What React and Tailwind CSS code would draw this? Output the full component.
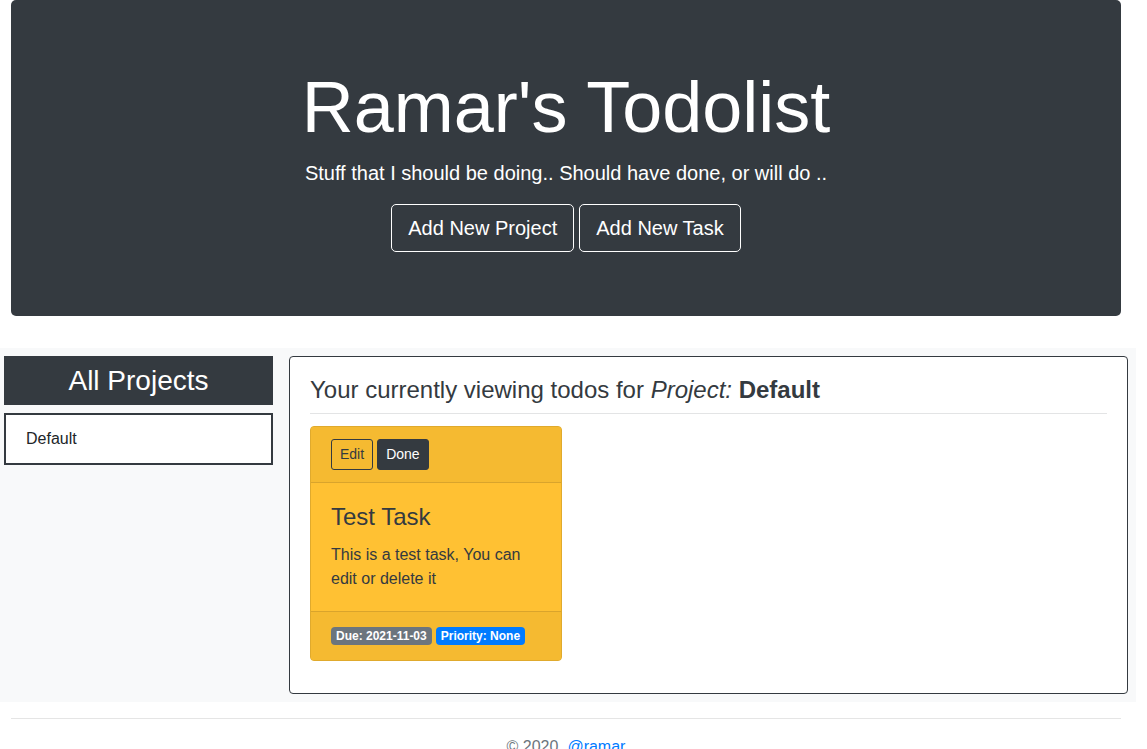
export default function App() {
  return (
    <div
      className="w-[1147px] bg-white text-[#212529] text-[16px] leading-[1.5]"
      style={{ fontFamily: '"Liberation Sans", Arial, sans-serif' }}
    >
      {/* Jumbotron */}
      <div className="ml-[11px] w-[1110px] rounded-[5px] bg-[#343a40] pt-[64px] pb-[64px] text-center text-white">
        <h1 className="text-[72px] font-light leading-[1.2] mb-[8px]">Ramar's Todolist</h1>
        <p className="text-[20px] leading-[1.5] mb-[16px]">
          Stuff that I should be doing.. Should have done, or will do ..
        </p>
        <div className="flex justify-center gap-[5px]">
          <button className="h-[48px] rounded-[5px] border border-white px-[16px] text-[20px] leading-[1.5] text-white">
            Add New Project
          </button>
          <button className="h-[48px] rounded-[5px] border border-white px-[16px] text-[20px] leading-[1.5] text-white">
            Add New Task
          </button>
        </div>
      </div>

      {/* Main section */}
      <div className="mt-[32px] w-[1136px] bg-[#f8f9fa] pl-[4px] pr-[8px] py-[8px] flex gap-[16px] items-start">
        {/* Sidebar */}
        <div className="w-[269px] shrink-0">
          <div className="h-[49px] bg-[#343a40] text-white text-[28px] leading-[49px] text-center">
            All Projects
          </div>
          <div className="mt-[8px] h-[52px] border-2 border-[#343a40] bg-white pl-[20px] flex items-center text-[16px] text-[#212529]">
            Default
          </div>
        </div>

        {/* Content card */}
        <div className="flex-1 h-[338px] rounded-[4px] border border-[#343a40] bg-white px-[20px] pt-[19px]">
          <h4 className="text-[24px] leading-[1.2] text-[#343a40] pb-[8px] border-b border-[#e3e4e5]">
            Your currently viewing todos for <em>Project:</em> <strong>Default</strong>
          </h4>
          <div className="mt-[12px] w-[252px] rounded-[4px] border border-[#e0aa2d] bg-[#ffc133] text-[#343a40] overflow-hidden">
            <div className="bg-[#f5ba31] border-b border-[#d9a42c] px-[20px] py-[12px] flex gap-[4px]">
              <button className="h-[31px] rounded-[3px] border border-[#343a40] px-[8px] text-[14px] leading-[1.5] text-[#343a40]">
                Edit
              </button>
              <button className="h-[31px] rounded-[3px] border border-[#343a40] bg-[#343a40] px-[8px] text-[14px] leading-[1.5] text-white">
                Done
              </button>
            </div>
            <div className="px-[20px] pt-[20px] pb-[20px]">
              <h4 className="text-[24px] leading-[1.2] mb-[11px]">Test Task</h4>
              <p className="text-[16px] leading-[24px]">This is a test task, You can edit or delete it</p>
            </div>
            <div className="bg-[#f5ba31] border-t border-[#d9a42c] px-[20px] py-[12px]">
              <div className="h-[24px] flex items-center gap-[4px]">
                <span className="inline-block rounded-[4px] bg-[#6c757d] px-[5px] py-[3px] text-[12px] font-bold leading-[12px] text-white">
                  Due: 2021-11-03
                </span>
                <span className="inline-block rounded-[4px] bg-[#007bff] px-[5px] py-[3px] text-[12px] font-bold leading-[12px] text-white">
                  Priority: None
                </span>
              </div>
            </div>
          </div>
        </div>
      </div>

      {/* Footer */}
      <div className="ml-[11px] w-[1110px] mt-[16px] border-t border-[rgba(0,0,0,0.1)] pt-[16px] text-center text-[#6c757d] text-[16px] leading-[24px] pb-[16px]">
        © 2020<a className="ml-[9px] text-[#007bff]" href="#">@ramar</a>
      </div>
    </div>
  );
}
